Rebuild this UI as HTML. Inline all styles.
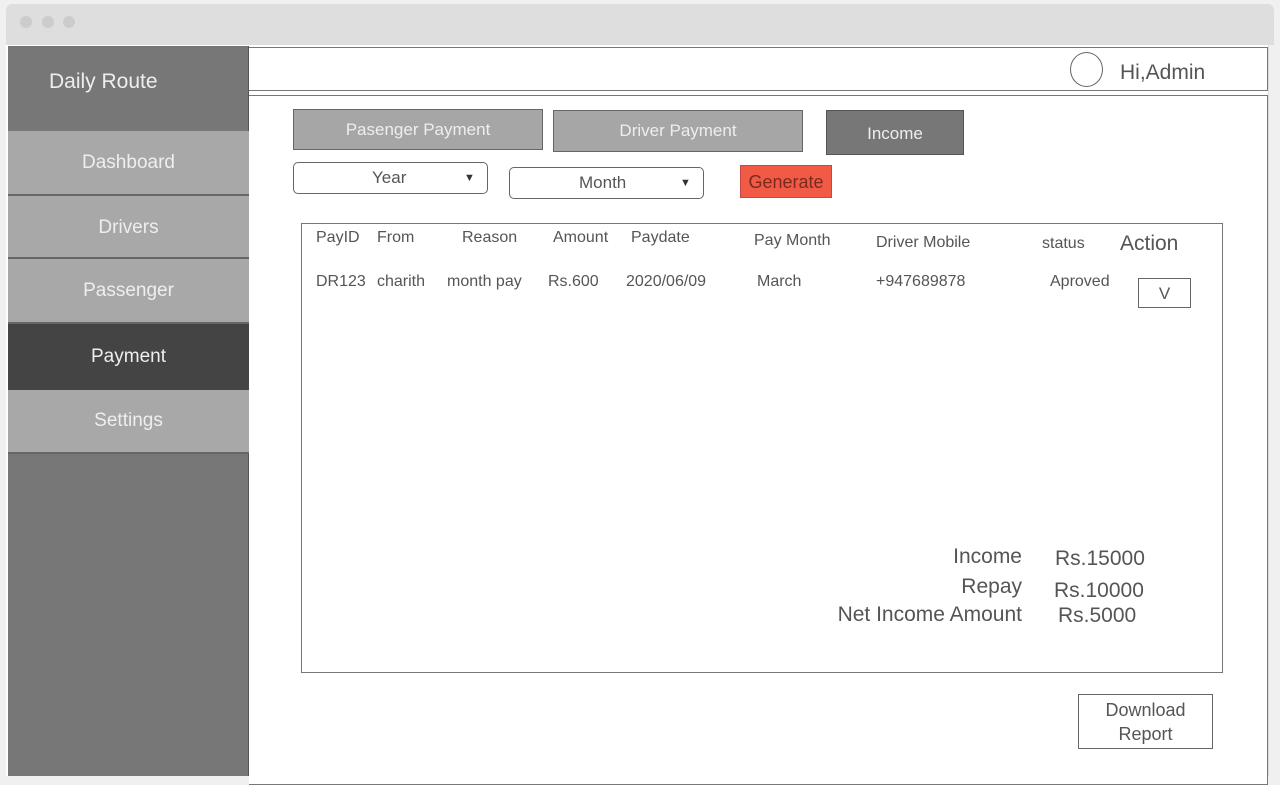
<!DOCTYPE html>
<html><head><style>
*{margin:0;padding:0;box-sizing:border-box}
body{width:1280px;height:776px;background:#f0f0f0;position:relative;overflow:hidden;font-family:"Liberation Sans",sans-serif;color:#555}
.a{position:absolute}
.t{position:absolute;white-space:nowrap}
.nav{position:absolute;left:8px;width:241px;color:#eee;font-size:19px;text-align:center;border-bottom:2px solid #666}
</style></head><body>
<div class="a" style="left:6px;top:4px;width:1268px;height:772px;background:#fff;border-radius:6px 6px 0 0"></div>
<div class="a" style="left:6px;top:4px;width:1268px;height:41px;background:#dedede;border-radius:6px 6px 0 0"></div>
<div class="a" style="left:20px;top:16px;width:12px;height:12px;border-radius:50%;background:#ccc"></div>
<div class="a" style="left:42px;top:16px;width:12px;height:12px;border-radius:50%;background:#ccc"></div>
<div class="a" style="left:63px;top:16px;width:12px;height:12px;border-radius:50%;background:#ccc"></div>
<div class="a" style="left:1268px;top:45px;width:12px;height:731px;background:#f0f0f0;border-left:1px solid #ddd"></div>

<div class="a" style="left:8px;top:46px;width:241px;height:730px;background:#777;border-right:1px solid #555"></div>
<div class="t" style="left:49px;top:70px;font-size:21px;color:#eee">Daily Route</div>
<div class="nav" style="top:131px;height:65px;line-height:63px;background:#a8a8a8">Dashboard</div>
<div class="nav" style="top:196px;height:63px;line-height:63px;background:#a8a8a8">Drivers</div>
<div class="nav" style="top:259px;height:65px;line-height:63px;background:#a8a8a8">Passenger</div>
<div class="nav" style="top:324px;height:66px;line-height:65px;background:#444;border-bottom:none">Payment</div>
<div class="nav" style="top:390px;height:64px;line-height:62px;background:#a8a8a8">Settings</div>

<div class="a" style="left:249px;top:47px;width:1019px;height:44px;border:1px solid #777;border-left:none;background:#fff"></div>
<div class="a" style="left:1070px;top:52px;width:33px;height:35px;border:1px solid #666;border-radius:50%"></div>
<div class="t" style="left:1120px;top:61px;font-size:21px;color:#555">Hi,Admin</div>
<div class="a" style="left:249px;top:95px;width:1019px;height:690px;border:1px solid #777;border-left:none;background:#fff"></div>

<div class="a" style="left:293px;top:109px;width:250px;height:41px;background:#a6a6a6;border:1px solid #666;color:#eee;font-size:17px;text-align:center;line-height:40px">Pasenger Payment</div>
<div class="a" style="left:553px;top:110px;width:250px;height:42px;background:#a6a6a6;border:1px solid #666;color:#eee;font-size:17px;text-align:center;line-height:40px">Driver Payment</div>
<div class="a" style="left:826px;top:110px;width:138px;height:45px;background:#777;border:1px solid #555;color:#eee;font-size:17px;text-align:center;line-height:45px">Income</div>

<div class="a" style="left:293px;top:162px;width:195px;height:32px;border:1px solid #666;border-radius:5px;font-size:17px;line-height:30px"><span class="t" style="left:78px">Year</span><span class="t" style="left:170px;font-size:11px;color:#333">▼</span></div>
<div class="a" style="left:509px;top:167px;width:195px;height:32px;border:1px solid #666;border-radius:5px;font-size:17px;line-height:30px"><span class="t" style="left:69px">Month</span><span class="t" style="left:170px;font-size:11px;color:#333">▼</span></div>
<div class="a" style="left:740px;top:165px;width:92px;height:33px;background:#f15a45;border:1px solid #c44;color:#7a2a20;font-size:18px;line-height:32px;text-align:center">Generate</div>

<div class="a" style="left:301px;top:223px;width:922px;height:450px;border:1px solid #777"></div>
<div style="font-size:16px;color:#555">
<span class="t" style="left:316px;top:229px">PayID</span>
<span class="t" style="left:377px;top:229px">From</span>
<span class="t" style="left:462px;top:229px">Reason</span>
<span class="t" style="left:553px;top:229px">Amount</span>
<span class="t" style="left:631px;top:229px">Paydate</span>
<span class="t" style="left:754px;top:232px">Pay Month</span>
<span class="t" style="left:876px;top:234px">Driver Mobile</span>
<span class="t" style="left:1042px;top:235px">status</span>
<span class="t" style="left:1120px;top:232px;font-size:21px">Action</span>
<span class="t" style="left:316px;top:273px">DR123</span>
<span class="t" style="left:377px;top:273px">charith</span>
<span class="t" style="left:447px;top:273px">month pay</span>
<span class="t" style="left:548px;top:273px">Rs.600</span>
<span class="t" style="left:626px;top:273px">2020/06/09</span>
<span class="t" style="left:757px;top:273px">March</span>
<span class="t" style="left:876px;top:273px">+947689878</span>
<span class="t" style="left:1050px;top:273px">Aproved</span>
</div>
<div class="a" style="left:1138px;top:278px;width:53px;height:30px;border:1px solid #666;text-align:center;line-height:30px;font-size:17px">V</div>

<div style="font-size:21px;color:#555">
<span class="t" style="right:258px;top:545px">Income</span>
<span class="t" style="right:258px;top:575px">Repay</span>
<span class="t" style="right:258px;top:603px">Net Income Amount</span>
<span class="t" style="left:1055px;top:547px">Rs.15000</span>
<span class="t" style="left:1054px;top:579px">Rs.10000</span>
<span class="t" style="left:1058px;top:604px">Rs.5000</span>
</div>

<div class="a" style="left:1078px;top:694px;width:135px;height:55px;border:1px solid #666;text-align:center;font-size:18px;line-height:24px;padding-top:3px">Download<br>Report</div>
</body></html>
